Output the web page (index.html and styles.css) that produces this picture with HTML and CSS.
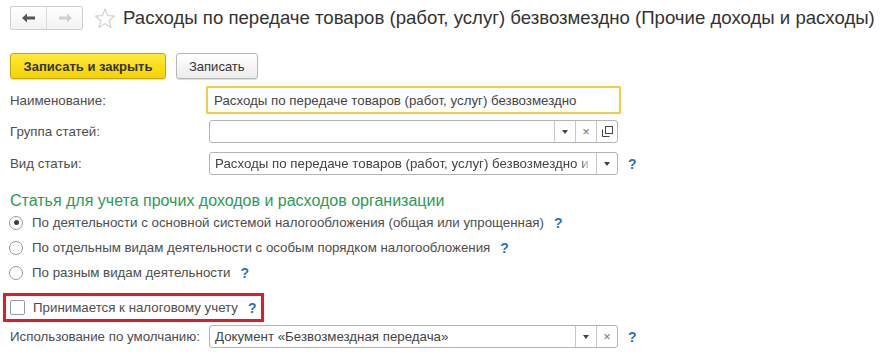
FILE: index.html
```html
<!DOCTYPE html>
<html lang="ru">
<head>
    <meta charset="UTF-8">
    <title>Расходы по передаче товаров (работ, услуг) безвозмездно</title>
    <link rel="stylesheet" href="styles.css">
</head>
<body>
    <div class="header">
        <div class="nav">
            <span class="nav-btn">
                <svg width="14" height="10" viewBox="0 0 14 10"><path d="M0 5 L5 0.5 L5 3.5 L13 3.5 L13 6.5 L5 6.5 L5 9.5 Z" fill="#555"/></svg>
            </span>
            <span class="nav-btn">
                <svg width="14" height="10" viewBox="0 0 14 10"><path d="M14 5 L9 0.5 L9 3.5 L1 3.5 L1 6.5 L9 6.5 L9 9.5 Z" fill="#cfcfcf"/></svg>
            </span>
        </div>
        <svg class="star" width="22" height="21" viewBox="0 0 22 21"><path d="M11 1 L13.6 7.6 L20.6 8 L15.2 12.5 L17 19.5 L11 15.6 L5 19.5 L6.8 12.5 L1.4 8 L8.4 7.6 Z" fill="none" stroke="#cfcfcf" stroke-width="1.1" stroke-linejoin="round"/></svg>
        <h1>Расходы по передаче товаров (работ, услуг) безвозмездно (Прочие доходы и расходы)</h1>
    </div>

    <div class="toolbar">
        <button class="btn btn-primary">Записать и закрыть</button>
        <button class="btn">Записать</button>
    </div>

    <div class="row row-first">
        <label class="label">Наименование:</label>
        <div class="field field-active">Расходы по передаче товаров (работ, услуг) безвозмездно</div>
    </div>

    <div class="row row-group">
        <label class="label">Группа статей:</label>
        <div class="field">
            <span class="value"></span>
            <span class="fbtn"><i class="tri"></i></span>
            <span class="fbtn clear">×</span>
            <span class="fbtn">
                <svg width="11" height="11" viewBox="0 0 11 11"><rect x="3.5" y="0.5" width="7" height="7" fill="none" stroke="#444"/><path d="M0.5 3.5 V10.5 H7.5" fill="none" stroke="#444"/></svg>
            </span>
        </div>
    </div>

    <div class="row">
        <label class="label">Вид статьи:</label>
        <div class="field">
            <span class="value fade">Расходы по передаче товаров (работ, услуг) безвозмездно и (</span>
            <span class="fbtn"><i class="tri"></i></span>
        </div>
        <span class="help">?</span>
    </div>

    <h2>Статья для учета прочих доходов и расходов организации</h2>

    <div class="radio-row">
        <span class="radio checked"></span>
        <span>По деятельности с основной системой налогообложения (общая или упрощенная)</span>
        <span class="help">?</span>
    </div>
    <div class="radio-row">
        <span class="radio"></span>
        <span>По отдельным видам деятельности с особым порядком налогообложения</span>
        <span class="help">?</span>
    </div>
    <div class="radio-row">
        <span class="radio"></span>
        <span>По разным видам деятельности</span>
        <span class="help">?</span>
    </div>

    <div class="check-box">
        <span class="check"></span>
        <span>Принимается к налоговому учету</span>
        <span class="help">?</span>
    </div>

    <div class="row row-last">
        <label class="label">Использование по умолчанию:</label>
        <div class="field">
            <span class="value">Документ «Безвозмездная передача»</span>
            <span class="fbtn"><i class="tri"></i></span>
            <span class="fbtn clear">×</span>
        </div>
        <span class="help">?</span>
    </div>
</body>
</html>
```

FILE: styles.css
```css
body {
    margin: 0;
    padding: 6px 10px 0 10px;
    font-family: 'Liberation Sans', Arial, sans-serif;
    font-size: 13.3px;
    color: #4d4d4d;
    background-color: white;
}
.header {
    display: flex;
    align-items: center;
    height: 24px;
}
.nav {
    flex: none;
    display: flex;
    border: 1px solid #d0d0d0;
    border-radius: 2px;
    background: linear-gradient(#ffffff, #f2f2f2);
}
.nav-btn {
    width: 35px;
    height: 22px;
    display: flex;
    align-items: center;
    justify-content: center;
}
.nav-btn + .nav-btn {
    border-left: 1px solid #dcdcdc;
}
.star {
    flex: none;
    margin-left: 11px;
}
h1 {
    margin: 0 0 0 7px;
    font-size: 18.6px;
    font-weight: normal;
    color: #333;
    white-space: nowrap;
}
.toolbar {
    display: flex;
    gap: 10px;
    margin-top: 23px;
}
.btn {
    height: 26px;
    padding: 0 12px;
    font-family: inherit;
    font-size: 13px;
    color: #333;
    white-space: nowrap;
    background: linear-gradient(#ffffff, #ececec);
    border: 1px solid #b8b8b8;
    border-radius: 3px;
    box-shadow: 0 1px 1px rgba(0, 0, 0, 0.15);
}
.btn-primary {
    width: 156px;
    padding: 0;
    font-weight: bold;
    background: linear-gradient(#ffea3c, #f5d300);
    border-color: #c8a800;
}
.row {
    display: flex;
    align-items: center;
    height: 23px;
    margin-top: 9px;
}
.row-first {
    height: 28px;
    margin-top: 7px;
}
.row-group {
    margin-top: 6px;
}
.label {
    width: 199px;
    flex: none;
}
.field {
    width: 407px;
    height: 21px;
    display: flex;
    align-items: center;
    border: 1px solid #b4b4b4;
    border-radius: 3px;
    background: white;
    color: #444;
    overflow: hidden;
}
.field-active {
    margin-left: -3px;
    width: 405px;
    height: 24px;
    padding-left: 6px;
    border: 2px solid #f0cf45;
    border-radius: 1px;
    white-space: nowrap;
}
.value {
    flex: 1;
    padding-left: 5px;
    white-space: nowrap;
    overflow: hidden;
}
.fade {
    -webkit-mask-image: linear-gradient(to right, #000 370px, transparent 382px);
    mask-image: linear-gradient(to right, #000 370px, transparent 382px);
}
.fbtn {
    width: 20px;
    height: 21px;
    flex: none;
    display: flex;
    align-items: center;
    justify-content: center;
    border-left: 1px solid #c8c8c8;
}
.clear {
    color: #777;
    font-size: 13px;
}
.tri {
    width: 0;
    height: 0;
    border-left: 3px solid transparent;
    border-right: 3px solid transparent;
    border-top: 4px solid #444;
}
.help {
    margin-left: 10px;
    color: #2a72b5;
    font-weight: bold;
    font-size: 14px;
}
h2 {
    margin: 17px 0 0 0;
    height: 18px;
    line-height: 18px;
    font-size: 16px;
    font-weight: normal;
    color: #2e9a55;
}
.radio-row {
    display: flex;
    align-items: center;
    height: 25px;
}
.radio {
    flex: none;
    width: 12px;
    height: 12px;
    margin: 0 9px 0 -1px;
    border: 1px solid #9a9a9a;
    border-radius: 50%;
    display: flex;
    align-items: center;
    justify-content: center;
    background: white;
}
.radio.checked::after {
    content: "";
    width: 5px;
    height: 5px;
    border-radius: 50%;
    background: #3f3f3f;
}
.check-box {
    display: flex;
    align-items: center;
    width: 251px;
    height: 23px;
    margin: 8px 0 0 -7px;
    padding-left: 4px;
    border: 3px solid #da1f2c;
}
.check {
    flex: none;
    width: 13px;
    height: 13px;
    margin: 0 8px 0 0;
    border: 1px solid #9a9a9a;
    border-radius: 2px;
}
.row-last {
    margin-top: 3px;
}
```
